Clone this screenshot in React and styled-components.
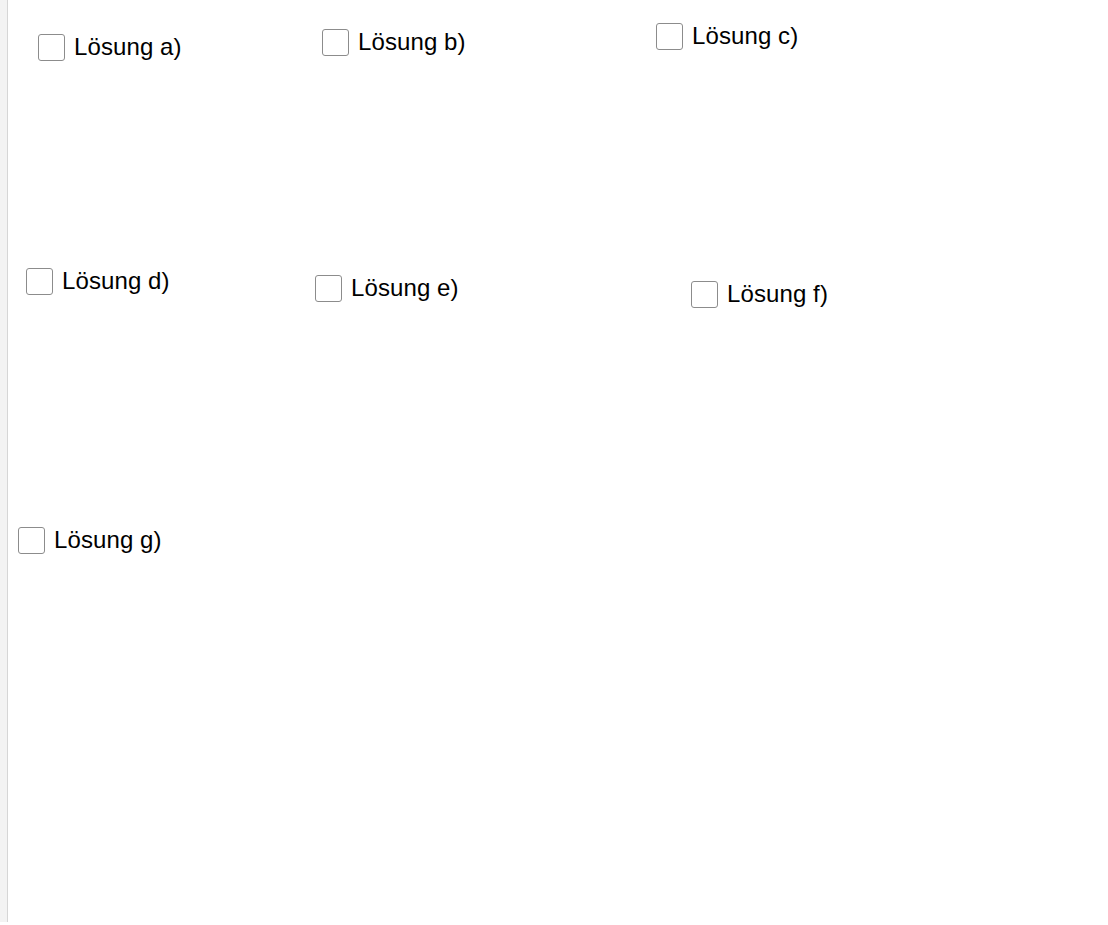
import React from "react";
import styled, { createGlobalStyle } from "styled-components";

const Global = createGlobalStyle`
  html, body { margin: 0; padding: 0; background: #ffffff; }
  body { font-family: "Liberation Sans", Arial, sans-serif; }
`;

const Page = styled.div`
  display: flex;
  width: 1108px;
  height: 925px;
  background: #ffffff;
`;

const SideStrip = styled.div`
  width: 7px;
  height: 922px;
  background: #f3f3f3;
  border-right: 1px solid #d6d6d6;
  flex-shrink: 0;
`;

const Canvas = styled.div`
  position: relative;
  flex: 1;
  height: 922px;
`;

const Toggle = styled.label`
  position: absolute;
  left: ${(p) => p.$x}px;
  top: ${(p) => p.$y}px;
  display: flex;
  align-items: center;
  gap: 9px;
  cursor: pointer;
  user-select: none;
`;

const Box = styled.span`
  width: 25px;
  height: 25px;
  box-sizing: content-box;
  border: 1.5px solid #8c8c8c;
  border-radius: 3px;
  background: #ffffff;
`;

const Label = styled.span`
  font-family: "Liberation Sans", Arial, sans-serif;
  font-size: 24px;
  letter-spacing: 0.1px;
  color: #000000;
  line-height: 28px;
`;

const items = [
  { id: "a", x: 30, y: 33 },
  { id: "b", x: 314, y: 28 },
  { id: "c", x: 648, y: 22 },
  { id: "d", x: 18, y: 267 },
  { id: "e", x: 307, y: 274 },
  { id: "f", x: 683, y: 280 },
  { id: "g", x: 10, y: 526 },
];

export default function App() {
  return (
    <>
      <Global />
      <Page>
        <SideStrip />
        <Canvas>
          {items.map((it) => (
            <Toggle key={it.id} $x={it.x} $y={it.y}>
              <Box />
              <Label>Lösung {it.id})</Label>
            </Toggle>
          ))}
        </Canvas>
      </Page>
    </>
  );
}
